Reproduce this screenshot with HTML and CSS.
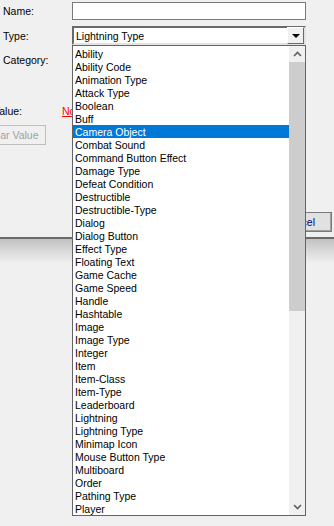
FILE: index.html
```html
<!DOCTYPE html>
<html lang="en">
<head>
    <meta charset="UTF-8">
    <meta name="viewport" content="width=device-width, initial-scale=1.0">
    <title>Variable</title>
    <link rel="stylesheet" href="styles.css">
</head>
<body>
    <div class="dialog">
        <!-- Name / Type / Category -->
        <div class="row row-name">
            <label class="lbl">Name:</label>
            <div class="edit"></div>
        </div>
        <div class="row row-type">
            <label class="lbl">Type:</label>
            <div class="combo">
                <span class="combo-text">Lightning Type</span>
                <span class="combo-btn"><span class="tri"></span></span>
            </div>
        </div>
        <div class="row row-cat">
            <label class="lbl">Category:</label>
        </div>

        <!-- Initial value -->
        <div class="row row-value">
            <label class="lbl lbl-value">Value:</label>
            <a class="link-none">None</a>
        </div>
        <div class="row row-clear">
            <button class="btn btn-clear" disabled>Clear Value</button>
        </div>

        <div class="row row-footer">
            <button class="btn btn-ok">OK</button>
            <button class="btn btn-cancel">Cancel</button>
        </div>
    </div>
    <div class="shadow"></div>

    <!-- Dropdown list of the combo -->
    <div class="dropdown">
        <ul class="items">
            <li>Ability</li>
            <li>Ability Code</li>
            <li>Animation Type</li>
            <li>Attack Type</li>
            <li>Boolean</li>
            <li>Buff</li>
            <li class="sel">Camera Object</li>
            <li>Combat Sound</li>
            <li>Command Button Effect</li>
            <li>Damage Type</li>
            <li>Defeat Condition</li>
            <li>Destructible</li>
            <li>Destructible-Type</li>
            <li>Dialog</li>
            <li>Dialog Button</li>
            <li>Effect Type</li>
            <li>Floating Text</li>
            <li>Game Cache</li>
            <li>Game Speed</li>
            <li>Handle</li>
            <li>Hashtable</li>
            <li>Image</li>
            <li>Image Type</li>
            <li>Integer</li>
            <li>Item</li>
            <li>Item-Class</li>
            <li>Item-Type</li>
            <li>Leaderboard</li>
            <li>Lightning</li>
            <li>Lightning Type</li>
            <li>Minimap Icon</li>
            <li>Mouse Button Type</li>
            <li>Multiboard</li>
            <li>Order</li>
            <li>Pathing Type</li>
            <li>Player</li>
        </ul>
        <div class="scrollbar">
            <div class="arrow">
                <svg width="9" height="6" viewBox="0 0 9 6"><path d="M1 5 L4.5 1.5 L8 5" fill="none" stroke="#606060" stroke-width="1.6"/></svg>
            </div>
            <div class="track">
                <div class="thumb"></div>
            </div>
            <div class="arrow">
                <svg width="9" height="6" viewBox="0 0 9 6"><path d="M1 1 L4.5 4.5 L8 1" fill="none" stroke="#606060" stroke-width="1.6"/></svg>
            </div>
        </div>
    </div>
</body>
</html>
```

FILE: styles.css
```css
body {
    margin: 0;
    padding: 0;
    background-color: #f0f0f0;
    font-family: "Liberation Sans", Arial, sans-serif;
    font-size: 10.5px;
    color: #000;
    overflow: hidden;
}
.dialog {
    position: relative;
    height: 237px;
    border-bottom: 2px solid #6a6a6a;
    background-color: #f0f0f0;
    display: flex;
    flex-direction: column;
}
.shadow {
    height: 24px;
    background: linear-gradient(#c2c2c2, #f0f0f0);
}
.row {
    display: flex;
    align-items: center;
}
.lbl {
    width: 69px;
    padding-left: 3px;
    flex-shrink: 0;
}
.row-name {
    margin-top: 2px;
    height: 18px;
}
.edit {
    width: 232px;
    height: 16px;
    background: #fff;
    border: 1px solid #7a7a7a;
}
.row-type {
    margin-top: 6px;
    height: 19px;
}
.combo {
    position: relative;
    width: 230px;
    height: 15px;
    background: #fff;
    border: 2px solid;
    border-color: #696969 #e3e3e3 #e3e3e3 #696969;
    display: flex;
    align-items: center;
}
.combo-text {
    padding-left: 2px;
}
.combo-btn {
    position: absolute;
    right: 0;
    top: -1px;
    width: 15px;
    height: 15px;
    background: #f0f0f0;
    border: 1px solid;
    border-color: #fff #696969 #696969 #fff;
    display: flex;
    align-items: center;
    justify-content: center;
}
.tri {
    width: 0;
    height: 0;
    border-left: 4px solid transparent;
    border-right: 4px solid transparent;
    border-top: 4px solid #000;
}
.row-cat {
    margin-top: 8px;
    height: 13px;
}
.row-value {
    margin-top: 38px;
    height: 13px;
}
.lbl-value {
    width: 62px;
    padding-left: 0;
    margin-left: -7px;
    margin-right: 7px;
}
.link-none {
    color: #ff0000;
    text-decoration: underline;
}
.row-clear {
    margin-top: 8px;
}
.btn {
    font-family: inherit;
    font-size: 10.5px;
    height: 20px;
    background: #e1e1e1;
    border: 1px solid #adadad;
    padding: 0 8px;
    white-space: nowrap;
}
.btn-clear {
    margin-left: -23px;
    width: 69px;
    padding: 0;
    color: #a0a0a0;
    background: #f0f0f0;
    border-color: #bfbfbf;
    flex-shrink: 0;
}
.row-footer {
    margin-top: auto;
    margin-bottom: 5px;
    justify-content: flex-end;
    gap: 6px;
    padding-right: 2px;
}
.btn-ok,
.btn-cancel {
    width: 75px;
}
.btn-cancel {
    color: #000080;
    border: 1px solid #7a7a7a;
    box-shadow: inset -1px -1px #a0a0a0;
    text-align: right;
    padding-right: 16px;
}
.dropdown {
    position: absolute;
    left: 72px;
    top: 45px;
    width: 232px;
    height: 469px;
    background: #fff;
    border: 1px solid #646464;
    display: flex;
}
.items {
    list-style: none;
    margin: 0;
    padding: 1px 0 0 0;
    flex: 1;
}
.items li {
    height: 13px;
    line-height: 14px;
    padding-left: 2px;
    white-space: nowrap;
}
.items li.sel {
    background: #0078d7;
    color: #fff;
}
.scrollbar {
    width: 16px;
    background: #f0f0f0;
    display: flex;
    flex-direction: column;
}
.arrow {
    height: 16px;
    display: flex;
    align-items: center;
    justify-content: center;
}
.track {
    flex: 1;
}
.thumb {
    height: 249px;
    background: #cdcdcd;
}
```
